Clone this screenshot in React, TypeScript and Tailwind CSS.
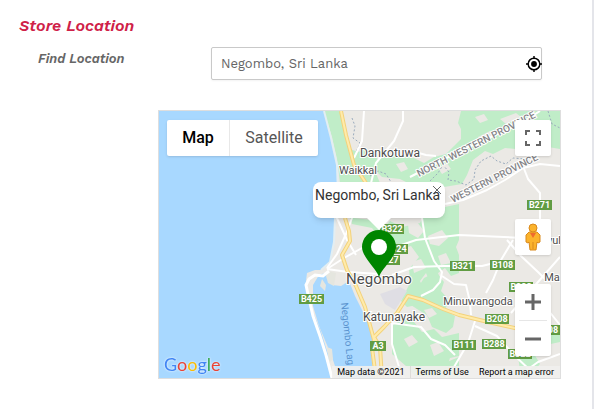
import { useState } from 'react';

interface Shield {
  label: string;
  x: number;
  y: number;
  width: number;
}

interface Place {
  name: string;
  x: number;
  y: number;
  size: number;
}

const shields: Shield[] = [
  { label: 'B322', x: 380, y: 224, width: 24 },
  { label: 'B324', x: 384, y: 244, width: 24 },
  { label: 'B327', x: 376, y: 255, width: 24 },
  { label: 'B271', x: 527, y: 200, width: 25 },
  { label: 'B321', x: 450, y: 261, width: 25 },
  { label: 'B108', x: 490, y: 260, width: 25 },
  { label: 'B425', x: 299, y: 294, width: 25 },
  { label: 'B208', x: 485, y: 314, width: 24 },
  { label: 'B208', x: 535, y: 325, width: 25 },
  { label: 'B111', x: 452, y: 340, width: 24 },
  { label: 'B288', x: 482, y: 339, width: 24 },
  { label: 'A3', x: 370, y: 341, width: 16 },
  { label: 'B322', x: 509, y: 282, width: 24 },
  { label: 'B322', x: 508, y: 349, width: 24 },
];

const places: Place[] = [
  { name: 'Dankotuwa', x: 390, y: 157, size: 12 },
  { name: 'Waikkal', x: 358, y: 174, size: 11 },
  { name: 'Negombo', x: 379, y: 284, size: 15 },
  { name: 'Katunayake', x: 394, y: 321, size: 12 },
  { name: 'Minuwangoda', x: 478, y: 305, size: 11 },
  { name: 'Ma', x: 552, y: 281, size: 11 },
  { name: 'Divul', x: 549, y: 244, size: 11 },
];

const highways = [
  'M341 111l5 24 8 30 12 18',
  'M345 218l4 13 1 10-8 14 5 15 9 16 9 21 6 22 3 11-2 8 4 30',
  'M374 337l6 10 2 31',
  'M374 337l10-10 13-14 11-17 15 4 20 9 16 6 29 7 31 7 17 6',
];

const MapArtwork = () => (
  <svg
    viewBox="159 111 401 267"
    preserveAspectRatio="xMinYMin slice"
    className="block w-full font-['Roboto',sans-serif]"
    role="img"
    aria-label="Map of Negombo"
  >
    <rect x="159" y="111" width="401" height="267" fill="#ebe9e5" />

    {/* vegetation */}
    <g fill="#c0edc8">
      <path d="M324 111h17l2 12 4 12 3 14 8 3 8-3 9 5 4 9-4 8 5 12h-40l-3-24-5-22z" />
      <path d="M376 160l18-6 20 4 10 5 10-6 12-3 8-8 7-7v-10l-3-6 3-12h99v38l-12-2-15 1-8-4-9 5-11-1-12 6-8-3-12 9-6 15-5 9-18 3-10-3-22 1-12-6-18-2-8-8z" />
      <path d="M346 206l8 12 18 2 10 10 8-9 12 6 18-4 6-12 33-7v36l-3 7 3 8v18l-8 3-6-8-7 5 5 12-13-3-4-9-6 8 6 13-9 11-10 2-6-6 9-18-1-14 10-12-8-11-14 4-12-5-13-17-20-4z" />
      <path d="M402 299l12-5 10-16 12-6 8 10-3 9 8 9-4 10 10 6-2 11-7 6-14-6-5-12-10-6z" />
      <path d="M392 326l12-8 10 4 8 10 12-3 8 8 17-4v23l-9 2-6 18h-29l-9-10-14-12z" />
      <path d="M442 364l17-7v21h-22zM518 356l15-4 7 12-12 14h-7z" />
      <path d="M540 330l14-2 6 6v8l-14 3zM528 125l12-4 20 2v24l-30-2z" />
    </g>
    <g fill="#ebe9e5">
      <path d="M475 117l9-3 4 6-8 3zM500 119l16-6 5 4-15 7z" />
      <path d="M478 137l12-6 5 4-14 7z" />
      <path d="M438 168l9-5 4 6-9 5zM396 164l8-2 4 7-7 3z" />
      <path d="M408 224l9-2 7 9-6 7-9-5z" />
      <path d="M428 236l14-6 6 8-9 8-9-2z" />
      <path d="M412 262l9-3 5 9-12 5z" />
      <path d="M438 256l8-3 5 10-10 2zM424 310l8-2 5 6-8 4z" />
      <path d="M404 339l8-4 6 7-9 5zM430 345l8-3 6 9-10 5z" />
    </g>
    <path d="M380 294l20-7 7 4-12 19-10-6z" fill="#dfdee4" />
    <g fill="none" stroke="#9aabbd" strokeDasharray="2 2">
      <path d="M370 176l8-5 8 3 5 8M430 181l8-8 5-8 6 7-1 8 8 1 10 4 8-6 1-9 6-9 10-5 6 5 9 3 7-6 13 1 10-8" />
      <path d="M352 118l3 8-2 12 7 5-4 9M548 111l4 13 8 4" />
    </g>

    {/* sea */}
    <path d="M159 111h165l7 27 6 27 1 30-3 23-1 24-4 20-9 8h-6l-8 3-1 8 3 14 4 17 8 20 7 22 4 24H159z" fill="#a8d8ff" />
    <path d="M324 111l7 27 6 27 1 30-3 23-1 24-4 20-9 8" fill="none" stroke="#e3eef2" strokeWidth="2" />

    {/* lagoon with its islets and the spit road */}
    <path d="M313 285l6-10 9-3 4 13 9 1 8-5 6 15 8 16 9 15 3 11-4 9 2 31h-34l-7-21-5-12-8-19-6-20z" fill="#a8d8ff" />
    <path d="M328 271l8 2-2 13-6-3-2-7zM322 279l4 6-1 6-5-5zM327 347l5 2 1 10-4 4z" fill="#e5e6df" />
    <path d="M332 378l-6-23-6-19-7-20-4-17-3-14 3-6 6-4 8 1 6-5" fill="none" stroke="#fff" strokeWidth="3" />

    {/* minor roads */}
    <g fill="none" stroke="#fff" strokeWidth="2" strokeLinejoin="round">
      <path d="M364 111l-2 30-8 17" />
      <path d="M403 111v10l-9 20-18 22-5 20" />
      <path d="M408 150l18 5 10 1" />
      <path d="M410 177l50-26 60-27 20-13" />
      <path d="M445 204l18-4 24-10 18-10 18-12 17-4 20 2" />
      <path d="M523 166l5 13 12 14v25l-1 20" />
      <path d="M327 268l10-14 9-20 6-16 4-19" />
      <path d="M327 269l21 3 31 2M327 269l17-11 18-10 20-12" />
      <path d="M336 216l11 24 9 15" />
      <path d="M390 249l26-9 43-5 45 2 56 3" />
      <path d="M422 218l3 20 9 23 8 11-2 10-7 8-12 6" />
      <path d="M392 275l22-8 30-1 38 0 12-3" />
      <path d="M442 276l12 8 12 1 4 17 1 13" />
      <path d="M513 240l-12 20-8 20-7 13" />
      <path d="M507 240l14 16 17 16 8 8" />
      <path d="M560 257l-29 33-20 23" />
      <path d="M392 323v21l8 26 5 9M392 323l29 4 10 12 14 6 10 10" />
      <path d="M475 321l-7 22-14 24-8 11M475 326l22 10 18 20 17 16" />
      <path d="M520 375l18-13 22-8M539 290l9 20 12 15" />
    </g>

    <g fill="none" strokeLinejoin="round">
      {highways.map((d) => (
        <path key={d} d={d} stroke="#f3d27c" strokeWidth="4" />
      ))}
      {highways.map((d) => (
        <path key={d} d={d} stroke="#ffebaa" strokeWidth="2" />
      ))}
    </g>

    <g fill="#858588" stroke="#fff" strokeWidth="2" paintOrder="stroke" fontSize="10" fontWeight="500">
      <text transform="translate(419 177) rotate(-27)">NORTH WESTERN PROVINCE</text>
      <text transform="translate(453 203) rotate(-27)">WESTERN PROVINCE</text>
    </g>
    <text transform="translate(341 303) rotate(84)" fontSize="10" fill="#5b94cf">Negombo Lag</text>

    {shields.map(({ label, x, y, width }) => (
      <g key={`${label}-${x}`}>
        <rect x={x} y={y} width={width} height="10" fill="#619c43" />
        <text x={x + width / 2} y={y + 8} fill="#fff" fontSize="9" fontWeight="700" textAnchor="middle">
          {label}
        </text>
      </g>
    ))}

    {places.map(({ name, x, y, size }) => (
      <text
        key={name}
        x={x}
        y={y}
        fontSize={size}
        fill="#4d4d4d"
        stroke="#fff"
        strokeWidth="2"
        paintOrder="stroke"
        textAnchor="middle"
      >
        {name}
      </text>
    ))}

    <path d="M379 277c-3-9-17-20-17-30a17 17 0 0 1 34 0c0 10-14 21-17 30z" fill="#008500" />
    <circle cx="379" cy="247" r="8" fill="#fff" />
  </svg>
);

const GoogleLogo = () => (
  <svg
    width="60"
    height="24"
    viewBox="0 0 60 24"
    className="overflow-visible font-['Lato',sans-serif] drop-shadow-[0_0_1px_white]"
    aria-label="Google"
  >
    <text x="1" y="17" fontSize="18">
      <tspan fill="#4285f4">G</tspan>
      <tspan fill="#ea4335">o</tspan>
      <tspan fill="#fbbc04">o</tspan>
      <tspan fill="#4285f4">g</tspan>
      <tspan fill="#34a853">l</tspan>
      <tspan fill="#ea4335">e</tspan>
    </text>
  </svg>
);

const StreetViewFigure = () => (
  <svg width="16" height="28" viewBox="0 0 16 28" aria-hidden="true">
    <path d="M4 9h8l3 3v7l-2 1-1-1-1 8H5l-1-8-1 1-2-1v-7z" fill="#fbb32c" stroke="#d9891c" />
    <path d="M8 19v7" stroke="#d9891c" />
    <path d="M5 10l3 5 3-5z" fill="#ef6c2d" />
    <circle cx="8" cy="5" r="4" fill="#fbb32c" stroke="#d9891c" />
  </svg>
);

const StoreMap = ({ address }: { address: string }) => (
  <div className="relative overflow-hidden border border-[#dedede] font-['Roboto',sans-serif]">
    <MapArtwork />

    <div className="absolute top-[9px] left-2 flex h-9 rounded-xs bg-white text-base shadow">
      <button type="button" className="w-[63px] border-r border-[#e8e8e8] font-medium text-black">
        Map
      </button>
      <button type="button" className="w-[88px] text-[#565656]">
        Satellite
      </button>
    </div>

    <button
      type="button"
      aria-label="Toggle fullscreen view"
      className="absolute top-[9px] right-[9px] flex size-9 items-center justify-center rounded-xs bg-white shadow"
    >
      <svg width="16" height="16" viewBox="0 0 16 16" fill="none" stroke="#666" strokeWidth="2">
        <path d="M1 5V1h4M11 1h4v4M15 11v4h-4M5 15H1v-4" />
      </svg>
    </button>

    <div className="absolute top-[71px] left-[154px] h-9 w-[132px] rounded-lg bg-white shadow-md">
      <p className="px-0.5 pt-1 text-sm leading-[19px] whitespace-nowrap text-[#333]">{address}</p>
      <button type="button" aria-label="Close" className="absolute top-1 right-1 size-2">
        <svg viewBox="0 0 8 8" stroke="#666">
          <path d="M0 0l8 8M8 0L0 8" />
        </svg>
      </button>
      <svg width="24" height="12" viewBox="0 0 24 12" className="absolute top-full left-[54px]">
        <path d="M0 0h24L12 12z" fill="#fff" />
      </svg>
    </div>

    <button
      type="button"
      aria-label="Street View"
      className="absolute top-[108px] right-[9px] flex size-9 items-center justify-center rounded-xs bg-white shadow"
    >
      <StreetViewFigure />
    </button>

    <div className="absolute top-[173px] right-[9px] flex w-9 flex-col items-center rounded-xs bg-white shadow">
      <button type="button" aria-label="Zoom in" className="flex size-9 items-center justify-center">
        <svg width="16" height="16" viewBox="0 0 16 16" stroke="#666" strokeWidth="3">
          <path d="M0 8h16M8 0v16" />
        </svg>
      </button>
      <div className="h-px w-7 bg-[#e6e6e6]" />
      <button type="button" aria-label="Zoom out" className="flex h-[35px] w-9 items-center justify-center">
        <svg width="16" height="16" viewBox="0 0 16 16" stroke="#666" strokeWidth="3">
          <path d="M0 8h16" />
        </svg>
      </button>
    </div>

    <a href="#google" className="absolute bottom-0 left-1">
      <GoogleLogo />
    </a>

    <div className="absolute right-0 bottom-0 flex h-3 bg-[#f1f0ed]/90 text-[9px] leading-3 text-black">
      <span className="px-[5px]">Map data ©2021</span>
      <a href="#terms" className="border-l border-[#dedcd8] px-[5px]">Terms of Use</a>
      <a href="#report" className="pr-1.5 pl-[5px]">Report a map error</a>
    </div>
  </div>
);

export default function App() {
  const [address, setAddress] = useState('Negombo, Sri Lanka');

  return (
    <main className="min-h-screen bg-white font-['Work_Sans','Inter',sans-serif]">
      <section className="min-h-screen border-r-2 border-[#e4e5ea] pt-4 pr-[31px]">
        <h2 className="pl-[19px] text-base leading-5 font-semibold text-[#cf2148] italic">Store Location</h2>

        <div className="mt-[11px] mr-[19px] flex items-start pl-[38px]">
          <label htmlFor="location" className="w-[173px] shrink-0 pt-1 text-[13px] leading-4 font-semibold text-[#666] italic">
            Find Location
          </label>
          <div className="flex h-[33px] min-w-0 grow items-center rounded-xs border border-[#c9c9c9] bg-white shadow-xs">
            <input
              id="location"
              type="text"
              value={address}
              onChange={(event) => setAddress(event.target.value)}
              className="min-w-0 grow pl-[9px] text-[13px] text-[#666] outline-none"
            />
            <button type="button" aria-label="Use my location" className="-mr-px size-4 shrink-0">
              <svg viewBox="1 1 22 22" fill="none" stroke="#000" strokeWidth="2">
                <circle cx="12" cy="12" r="8" />
                <circle cx="12" cy="12" r="4" fill="#000" stroke="none" />
                <path d="M12 1v3M12 20v3M1 12h3M20 12h3" />
              </svg>
            </button>
          </div>
        </div>

        <div className="mt-[30px] ml-[158px]">
          <StoreMap address={address} />
        </div>
      </section>
    </main>
  );
}
